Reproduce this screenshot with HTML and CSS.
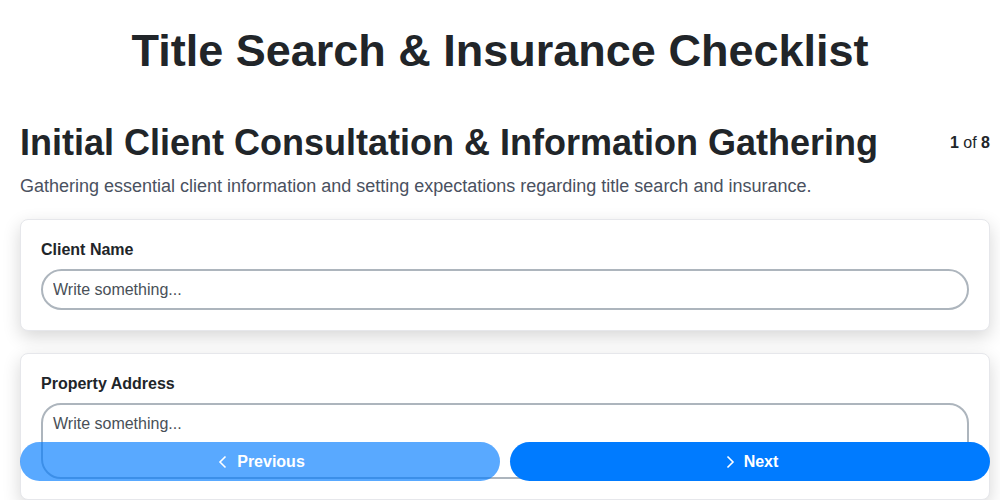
FILE: index.html
```html
<!DOCTYPE html>
<html lang="en">
<head>
<meta charset="utf-8">
<title>Title Search &amp; Insurance Checklist</title>
<link rel="stylesheet" href="styles.css">
</head>
<body>
<header class="header">
  <h1 class="title">Title Search &amp; Insurance Checklist</h1>
</header>
<main class="page">
  <div class="step-head">
    <h2 class="step-title">Initial Client Consultation &amp; Information Gathering</h2>
    <div class="counter"><b>1</b> of <b>8</b></div>
  </div>
  <p class="step-desc">Gathering essential client information and setting expectations regarding title search and insurance.</p>
  <div class="card">
    <label class="field-label">Client Name</label>
    <input class="field-input" type="text" placeholder="Write something...">
  </div>
  <div class="card card-gap">
    <label class="field-label">Property Address</label>
    <textarea class="field-area" placeholder="Write something..."></textarea>
  </div>
</main>
<div class="nav">
  <button class="btn btn-prev">
    <svg class="chev" viewBox="0 0 16 16" width="16" height="16"><path d="M10.5 2.5 L5 8 L10.5 13.5" fill="none" stroke="currentColor" stroke-width="1.6"/></svg>
    <span>Previous</span>
  </button>
  <button class="btn btn-next">
    <svg class="chev" viewBox="0 0 16 16" width="16" height="16"><path d="M5.5 2.5 L11 8 L5.5 13.5" fill="none" stroke="currentColor" stroke-width="1.6"/></svg>
    <span>Next</span>
  </button>
</div>
</body>
</html>
```
FILE: styles.css
```css
* { box-sizing: border-box; }
html, body { margin: 0; padding: 0; background: #fff; }
body {
  font-family: "Liberation Sans", Arial, sans-serif;
  color: #212529;
  overflow: hidden;
}
.header {
  padding-top: 24px;
}
.page {
  padding: 0 10px 0 20px;
}
.title {
  margin: 0;
  text-align: center;
  font-size: 45px;
  line-height: 54px;
  font-weight: 700;
  color: #212529;
}
.step-head {
  margin-top: 43px;
  display: flex;
  justify-content: space-between;
  align-items: center;
}
.step-title {
  margin: 0;
  font-size: 36px;
  line-height: 1.2;
  font-weight: 700;
}
.counter {
  font-size: 16px;
  color: #212529;
}
.step-desc {
  margin: 9px 0 0;
  font-size: 18px;
  line-height: 26px;
  color: #4a5160;
}
.card {
  margin-top: 20px;
  background: #fff;
  border: 1px solid #e6e7eb;
  border-radius: 8px;
  padding: 20px 20px 20px;
  box-shadow: 0 6px 18px rgba(0,0,0,0.16);
  display: flex;
  flex-direction: column;
}
.card-gap { margin-top: 22px; }
.field-label {
  font-size: 16px;
  font-weight: 700;
  line-height: 19px;
  margin-bottom: 10px;
}
.field-input, .field-area {
  font-family: "Liberation Sans", Arial, sans-serif;
  font-size: 16px;
  color: #495057;
  border: 2px solid #adb5bd;
  background: #fff;
  padding: 0 10px;
  outline: none;
}
.field-input {
  height: 41px;
  border-radius: 21px;
}
.field-area {
  height: 76px;
  border-radius: 20px;
  padding: 10px 10px;
  resize: none;
}
.field-input::placeholder, .field-area::placeholder {
  color: #495057;
  opacity: 1;
}
.nav {
  position: fixed;
  left: 20px;
  right: 10px;
  bottom: 19px;
  display: flex;
  gap: 10px;
}
.btn {
  flex: 1;
  height: 39px;
  border: none;
  border-radius: 20px;
  color: #fff;
  font-family: "Liberation Sans", Arial, sans-serif;
  font-size: 16px;
  font-weight: 700;
  display: flex;
  align-items: center;
  justify-content: center;
  gap: 6px;
}
.btn-prev { background: #007bff; opacity: 0.65; }
.btn-next { background: #007bff; }
.chev { display: block; }
```
